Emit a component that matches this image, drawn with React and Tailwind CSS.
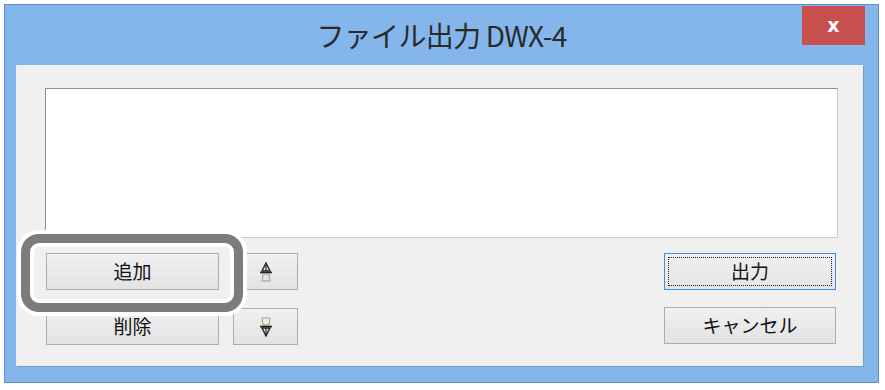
import React from "react";

const jp = { fontFamily: '"Noto Sans CJK JP", "Noto Sans", sans-serif' };

const UpArrow = () => (
  <svg width="14" height="22" viewBox="0 0 14 22">
    <path d="M7 2 L11 10 L3 10 Z" fill="none" stroke="#222" strokeWidth="1.4" />
    <line x1="1" y1="11.5" x2="13" y2="11.5" stroke="#222" strokeWidth="1.6" />
    <path d="M4 13 L10 13 L11 20 L3 20 Z" fill="#e4e4d8" stroke="#9a9a9a" strokeWidth="1" />
    <line x1="7" y1="2" x2="7" y2="10" stroke="#222" strokeWidth="1.2" />
  </svg>
);

const DownArrow = () => (
  <svg width="14" height="22" viewBox="0 0 14 22">
    <path d="M3 2 L11 2 L10 9 L4 9 Z" fill="#f0f0c8" stroke="#9a9a9a" strokeWidth="1" />
    <line x1="1" y1="10.5" x2="13" y2="10.5" stroke="#222" strokeWidth="1.6" />
    <path d="M3 12 L11 12 L7 20 Z" fill="none" stroke="#222" strokeWidth="1.4" />
    <line x1="7" y1="12" x2="7" y2="20" stroke="#222" strokeWidth="1.2" />
  </svg>
);

const Btn = ({ children, className = "" }) => (
  <button
    className={`h-[37px] flex items-center justify-center border border-[#acacac] bg-gradient-to-b from-[#f0f0f0] to-[#e3e3e3] text-[19px] text-[#111] ${className}`}
    style={jp}
  >
    {children}
  </button>
);

export default function App() {
  return (
    <div className="w-[885px] h-[390px] bg-white pl-[4px] pt-[4px]">
      <div className="w-[875px] h-[379px] border border-[#5d8fc8] bg-[#84b6ec] flex flex-col">
        <div className="h-[60px] shrink-0 relative flex items-center justify-center">
          <span className="text-[28px] leading-none text-[#2a2a2a] tracking-tight" style={jp}>
            ファイル出力 DWX-4
          </span>
          <div className="absolute top-[1px] right-[13px] w-[63px] h-[39px] bg-[#c7504f] flex items-center justify-center">
            <span className="text-white text-[19px] font-bold leading-none" style={{ fontFamily: '"DejaVu Sans", sans-serif' }}>
              x
            </span>
          </div>
        </div>
        <div className="ml-[11px] mr-[14px] mb-[15px] flex-1 bg-[#f0f0f0] border-t border-l border-[#e8eef6] border-r border-b border-r-[#6f9dd0] border-b-[#6f9dd0] flex flex-col relative">
          <div className="ml-[28px] mr-[25px] mt-[22px] h-[150px] bg-white border border-[#8e9196] border-r-[#c9cbce] border-b-[#c9cbce]" />
          <div className="flex mt-[15px] ml-[29px] mr-[27px]">
            <div className="flex flex-col gap-[18px]">
              <Btn className="w-[173px]">追加</Btn>
              <Btn className="w-[173px]">削除</Btn>
            </div>
            <div className="flex flex-col gap-[18px] ml-[14px]">
              <Btn className="w-[65px]">
                <UpArrow />
              </Btn>
              <Btn className="w-[65px]">
                <DownArrow />
              </Btn>
            </div>
            <div className="flex-1" />
            <div className="flex flex-col gap-[17px]">
              <button
                className="w-[172px] h-[37px] border border-[#3d8ee6] bg-gradient-to-b from-[#f0f0f0] to-[#e5e5e5] p-[3px]"
                style={jp}
              >
                <div className="w-full h-full border border-dotted border-[#222] flex items-center justify-center text-[19px] text-[#111]">
                  出力
                </div>
              </button>
              <Btn className="w-[172px]">キャンセル</Btn>
            </div>
          </div>
          <div className="absolute left-[4px] top-[168px] w-[222px] h-[78px] rounded-[18px] border-[9px] border-[#7b7c7e] shadow-[0_0_0_4px_#ffffff,inset_0_0_0_4px_#ffffff]" />
        </div>
      </div>
    </div>
  );
}
